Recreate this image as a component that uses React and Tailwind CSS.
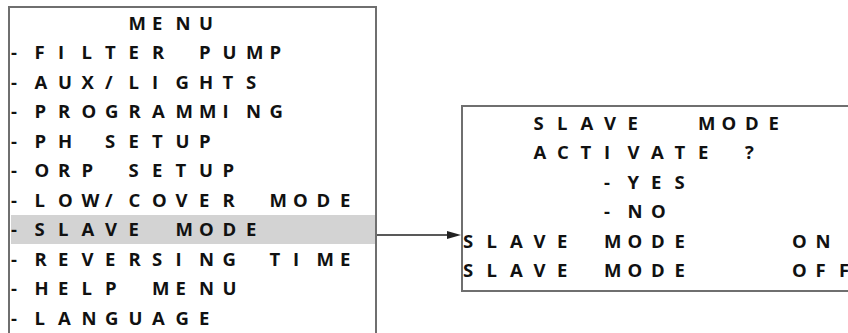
import React from "react";

const leftRows = [
  "     MENU",
  "-FILTER PUMP",
  "-AUX/LIGHTS",
  "-PROGRAMMING",
  "-PH SETUP",
  "-ORP SETUP",
  "-LOW/COVER MODE",
  "-SLAVE MODE",
  "-REVERSING TIME",
  "-HELP MENU",
  "-LANGUAGE",
];

const rightRows = [
  "   SLAVE  MODE",
  "   ACTIVATE ?",
  "      -YES",
  "      -NO",
  "SLAVE MODE    ON",
  "SLAVE MODE    OFF",
];

function Row({ text, highlight }) {
  return (
    <div
      className={
        "flex h-[29.5px] items-center leading-none " +
        (highlight ? "bg-[#d3d3d3]" : "")
      }
    >
      {text.split("").map((c, i) => (
        <span key={i} className="w-[23.5px] flex-none text-left">
          {c === " " ? "\u00a0" : c}
        </span>
      ))}
    </div>
  );
}

export default function App() {
  return (
    <div
      className="relative flex h-[333px] w-[848px] overflow-hidden bg-white text-[18.5px] font-bold text-[#111111]"
      style={{ fontFamily: "'Open Sans', Lato, sans-serif" }}
    >
      <div className="ml-[8px] mt-[6px] h-[360px] w-[369px] flex-none border-2 border-[#6f6f6f] pl-[1px]">
        {leftRows.map((t, i) => (
          <Row key={i} text={t} highlight={i === 7} />
        ))}
      </div>
      <div className="w-[84px] flex-none pt-[229px]">
        <svg width="84" height="12" viewBox="0 0 84 12">
          <line x1="0" y1="6" x2="74" y2="6" stroke="#222" strokeWidth="1.5" />
          <polygon points="70,2 84,6 70,10" fill="#222" />
        </svg>
      </div>
      <div className="mt-[105px] h-[187px] w-[420px] flex-none border-2 border-[#6f6f6f] pt-[1px]">
        {rightRows.map((t, i) => (
          <Row key={i} text={t} />
        ))}
      </div>
    </div>
  );
}
